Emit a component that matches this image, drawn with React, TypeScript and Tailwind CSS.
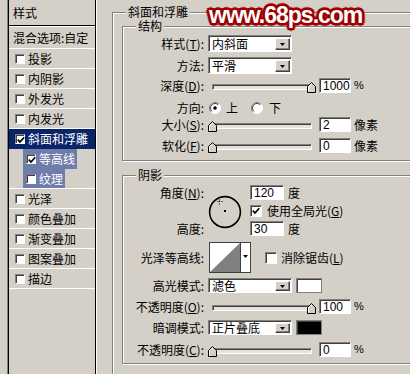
import React from 'react';

const PANEL = 'bg-[#d4d0c8]';

const Check = ({ checked = false, big = false }: { checked?: boolean; big?: boolean }) => (
  <span
    className={`relative inline-block shrink-0 bg-white border border-t-[#808080] border-l-[#808080] border-r-white border-b-white shadow-[inset_1px_1px_0_#404040] ${
      big ? 'w-[12px] h-[12px]' : 'w-[10px] h-[10px]'
    }`}
  >
    {checked && (
      <svg className="absolute left-[1px] top-[1px]" width="8" height="8" viewBox="0 0 8 8">
        <path d="M0.8 3.6 L3 6 L7.2 1.2" stroke="#000" strokeWidth="1.7" fill="none" />
      </svg>
    )}
  </span>
);

const Radio = ({ on = false }: { on?: boolean }) => (
  <svg width="12" height="12" viewBox="0 0 12 12" className="shrink-0">
    <circle cx="6" cy="6" r="5.5" fill="#fff" />
    <path d="M2.1 9.9 A5.5 5.5 0 0 1 9.9 2.1" stroke="#808080" fill="none" />
    <path d="M2.8 9.2 A4.5 4.5 0 0 1 9.2 2.8" stroke="#404040" fill="none" />
    <path d="M9.9 2.1 A5.5 5.5 0 0 1 2.1 9.9" stroke="#fff" fill="none" />
    {on && <circle cx="6" cy="6" r="1.8" fill="#000" />}
  </svg>
);

// sunken white text box
const Field = ({ children, className = '' }: { children?: React.ReactNode; className?: string }) => (
  <div
    className={`h-[15px] shrink-0 bg-white border border-t-[#808080] border-l-[#808080] border-b-white border-r-white shadow-[inset_1px_1px_0_#404040] flex items-center pl-[3px] font-['Liberation_Sans',Arial,sans-serif] text-[12px] ${className}`}
  >
    {children}
  </div>
);

const Select = ({ value, tall = false }: { value: string; tall?: boolean }) => (
  <div
    className={`w-[84px] shrink-0 bg-white border border-t-[#808080] border-l-[#808080] border-b-white border-r-white shadow-[inset_1px_1px_0_#404040] flex items-center pl-[3px] pr-[1px] ${
      tall ? 'h-[17px]' : 'h-[15px]'
    }`}
  >
    <span className="flex-1 whitespace-nowrap">{value}</span>
    <span className="w-[15px] h-[calc(100%-3px)] mt-[1px] bg-[#d4d0c8] border border-t-white border-l-white border-r-[#404040] border-b-[#404040] shadow-[inset_-1px_-1px_0_#808080] flex items-center justify-center">
      <svg width="5" height="3" viewBox="0 0 5 3">
        <path d="M0 0 H5 L2.5 3 Z" fill="#000" />
      </svg>
    </span>
  </div>
);

const Thumb = () => (
  <svg width="9" height="11" viewBox="0 0 9 11">
    <path d="M0.5 10.5 V4.5 L4.5 0.5 L8.5 4.5 V10.5 Z" fill="#d4d0c8" stroke="#000" />
    <path d="M1.5 9.5 V4.9 L4.5 1.9" stroke="#fff" fill="none" />
  </svg>
);

const Slider = ({ atEnd = false }: { atEnd?: boolean }) => (
  <div className="relative w-[110px] h-[15px] ml-[3px] shrink-0">
    <div className="absolute left-[5px] right-[5px] top-[6px] h-[6px] bg-[#e4e2dc] border border-t-[#808080] border-l-[#808080] border-b-white border-r-white shadow-[inset_1px_1px_0_#404040]" />
    <div className={atEnd ? 'absolute right-[1px] top-[4px] leading-none' : 'absolute left-[1px] top-[4px] leading-none'}>
      <Thumb />
    </div>
  </div>
);

const Row = ({
  label,
  className = '',
  children,
}: {
  label: React.ReactNode;
  className?: string;
  children?: React.ReactNode;
}) => (
  <div className={`flex items-center ${className}`}>
    <span className="w-[81px] shrink-0 text-right whitespace-nowrap">{label}</span>
    {children}
  </div>
);

const Group = ({
  title,
  className = '',
  legendClass = 'ml-[13px]',
  children,
}: {
  title: string;
  className?: string;
  legendClass?: string;
  children?: React.ReactNode;
}) => (
  <fieldset
    className={`border border-[#808080] shadow-[inset_1px_1px_0_#fff,1px_1px_0_#fff] ${className}`}
  >
    <legend className={`relative px-[2px] leading-[12px] ${PANEL} ${legendClass}`}>{title}</legend>
    {children}
  </fieldset>
);

const ListRow = ({ label }: { label: string }) => (
  <div className="h-[20px] border-b border-white flex items-center pl-[6px] gap-[3px]">
    <Check />
    <span>{label}</span>
  </div>
);

const SubRow = ({ label, checked = false, last = false }: { label: string; checked?: boolean; last?: boolean }) => (
  <div className={last ? 'h-[20px] border-b border-white pl-[14px]' : 'h-[20px] pl-[14px]'}>
    <span className="inline-flex h-full items-center gap-[3px] pl-[3px] pr-[2px] bg-[#6e7dab] text-white">
      <Check checked={checked} />
      <span>{label}</span>
    </span>
  </div>
);

const LeftPanel = () => (
  <div className="ml-[7px] w-[90px] h-full border-l border-l-[#808080] border-r border-r-white shrink-0">
    <div className="h-full border-l border-l-black border-r border-r-black flex flex-col">
      <div className="h-[25px] flex items-center pl-[4px]">样式</div>
      <div className="h-[1px] bg-black" />
      <div className="h-[1px] bg-white" />
      <div className="h-[22px] border-b border-white flex items-center pl-[4px] whitespace-nowrap">混合选项:自定</div>
      {['投影', '内阴影', '外发光', '内发光'].map((l) => (
        <ListRow key={l} label={l} />
      ))}
      <div className="h-[20px] bg-[#0a246a] text-white flex items-center pl-[6px] gap-[3px]">
        <Check checked />
        <span>斜面和浮雕</span>
      </div>
      <SubRow label="等高线" checked />
      <SubRow label="纹理" last />
      {['光泽', '颜色叠加', '渐变叠加', '图案叠加', '描边'].map((l) => (
        <ListRow key={l} label={l} />
      ))}
    </div>
  </div>
);

const Dial = () => (
  <svg width="34" height="34" viewBox="0 0 34 34" className="ml-[4px] mt-[10px] shrink-0">
    <circle cx="17" cy="17" r="15.4" stroke="#000" strokeWidth="1.6" fill="none" />
    <rect x="16" y="15" width="2" height="2" fill="#000" />
    <path d="M9.5 6.5h1M13.5 6.5h1M11.5 4.5v1M11.5 8.5v1" stroke="#000" strokeWidth="1" />
    <rect x="11" y="6" width="1" height="1" fill="#000" />
  </svg>
);

const Contour = () => (
  <svg width="42" height="31" viewBox="0 0 42 31" className="ml-[5px] shrink-0">
    <rect x="0.5" y="0.5" width="41" height="30" fill="#fff" stroke="#404040" />
    <polygon points="1,30 31,1 31,30" fill="#808080" />
    <line x1="31.5" y1="1" x2="31.5" y2="30" stroke="#404040" />
    <polygon points="34,13 39,13 36.5,16" fill="#000" />
  </svg>
);

const Swatch = ({ black = false }: { black?: boolean }) => (
  <div
    className={`ml-[4px] w-[26px] h-[15px] border border-[#808080] shadow-[inset_1px_1px_0_#404040] ${
      black ? 'bg-black' : 'bg-white'
    }`}
  />
);

const RightPanel = () => (
  <div className="ml-[15px] pt-[6px] shrink-0">
    <Group title="斜面和浮雕" className="w-[320px] h-[400px] pl-[9px]" legendClass="ml-[4px]">
      <Group title="结构" className="mt-[2px]">
        <div className="flex flex-col pt-[3px] pb-[7px]">
          <Row label={<>样式(<u>T</u>):</>} className="h-[17px]">
            <span className="ml-[4px]" />
            <Select value="内斜面" tall />
          </Row>
          <Row label="方法:" className="h-[17px] mt-[5px]">
            <span className="ml-[4px]" />
            <Select value="平滑" tall />
          </Row>
          <Row label={<>深度(<u>D</u>):</>} className="h-[15px] mt-[4px]">
            <Slider atEnd />
            <Field className="ml-[2px] w-[32px]">1000</Field>
            <span className="ml-[3px] font-['Liberation_Sans',Arial,sans-serif] text-[11px]">%</span>
          </Row>
          <Row label="方向:" className="h-[15px] mt-[7px]">
            <span className="ml-[5px]" />
            <Radio on />
            <span className="ml-[5px]">上</span>
            <span className="ml-[13px]" />
            <Radio />
            <span className="ml-[6px]">下</span>
          </Row>
          <Row label={<>大小(<u>S</u>):</>} className="h-[15px] mt-[2px]">
            <Slider />
            <Field className="ml-[2px] w-[32px]">2</Field>
            <span className="ml-[3px]">像素</span>
          </Row>
          <Row label={<>软化(<u>F</u>):</>} className="h-[15px] mt-[6px]">
            <Slider />
            <Field className="ml-[2px] w-[32px]">0</Field>
            <span className="ml-[3px]">像素</span>
          </Row>
        </div>
      </Group>

      <Group title="阴影" className="mt-[8px]">
        <div className="flex flex-col pt-[4px] pb-[6px]">
          <div className="flex">
            <div className="w-[81px] h-[51px] shrink-0 flex flex-col justify-between">
              <div className="h-[15px] flex items-center justify-end whitespace-nowrap">
                角度(<u>N</u>):
              </div>
              <div className="h-[15px] flex items-center justify-end">高度:</div>
            </div>
            <Dial />
            <div className="ml-[8px] flex flex-col gap-[3px]">
              <div className="h-[15px] flex items-center">
                <Field className="w-[34px]">120</Field>
                <span className="ml-[4px]">度</span>
              </div>
              <div className="h-[15px] flex items-center">
                <Check big checked />
                <span className="ml-[5px] whitespace-nowrap">
                  使用全局光(<u>G</u>)
                </span>
              </div>
              <div className="h-[15px] flex items-center">
                <Field className="w-[34px]">30</Field>
                <span className="ml-[4px]">度</span>
              </div>
            </div>
          </div>
          <Row label="光泽等高线:" className="h-[31px] mt-[6px]">
            <Contour />
            <span className="ml-[14px]" />
            <Check big />
            <span className="ml-[4px] whitespace-nowrap">
              消除锯齿(<u>L</u>)
            </span>
          </Row>
          <Row label="高光模式:" className="h-[15px] mt-[5px]">
            <span className="ml-[4px]" />
            <Select value="滤色" />
            <Swatch />
          </Row>
          <Row label={<>不透明度(<u>O</u>):</>} className="h-[15px] mt-[6px]">
            <Slider atEnd />
            <Field className="ml-[2px] w-[32px]">100</Field>
            <span className="ml-[3px] font-['Liberation_Sans',Arial,sans-serif] text-[11px]">%</span>
          </Row>
          <Row label="暗调模式:" className="h-[15px] mt-[6px]">
            <span className="ml-[4px]" />
            <Select value="正片叠底" />
            <Swatch black />
          </Row>
          <Row label={<>不透明度(<u>C</u>):</>} className="h-[15px] mt-[7px]">
            <Slider />
            <Field className="ml-[2px] w-[32px]">0</Field>
            <span className="ml-[3px] font-['Liberation_Sans',Arial,sans-serif] text-[11px]">%</span>
          </Row>
        </div>
      </Group>
    </Group>
  </div>
);

export default function App() {
  return (
    <div
      className={`relative w-[410px] h-[374px] overflow-hidden ${PANEL} flex text-[12px] leading-none text-black font-['Noto_Sans_CJK_SC','Noto_Sans',sans-serif]`}
    >
      <LeftPanel />
      <RightPanel />
      {/* site watermark over the dialog */}
      <div className="absolute left-[209px] top-[0px] font-['Liberation_Sans',Arial,sans-serif] font-bold text-[23px] leading-[30px] tracking-[-1px] text-white [text-shadow:1px_0_0_#9a0000,-1px_0_0_#9a0000,0_1px_0_#9a0000,0_-1px_0_#9a0000,2px_0_0_#9a0000,-2px_0_0_#9a0000,0_2px_0_#9a0000,0_-2px_0_#9a0000,2px_2px_0_#9a0000,-2px_-2px_0_#9a0000,2px_-2px_0_#9a0000,-2px_2px_0_#9a0000,3px_0_1px_#b82020,-3px_0_1px_#b82020,0_3px_1px_#b82020,0_-3px_1px_#b82020]">
        www.68ps.com
      </div>
    </div>
  );
}
